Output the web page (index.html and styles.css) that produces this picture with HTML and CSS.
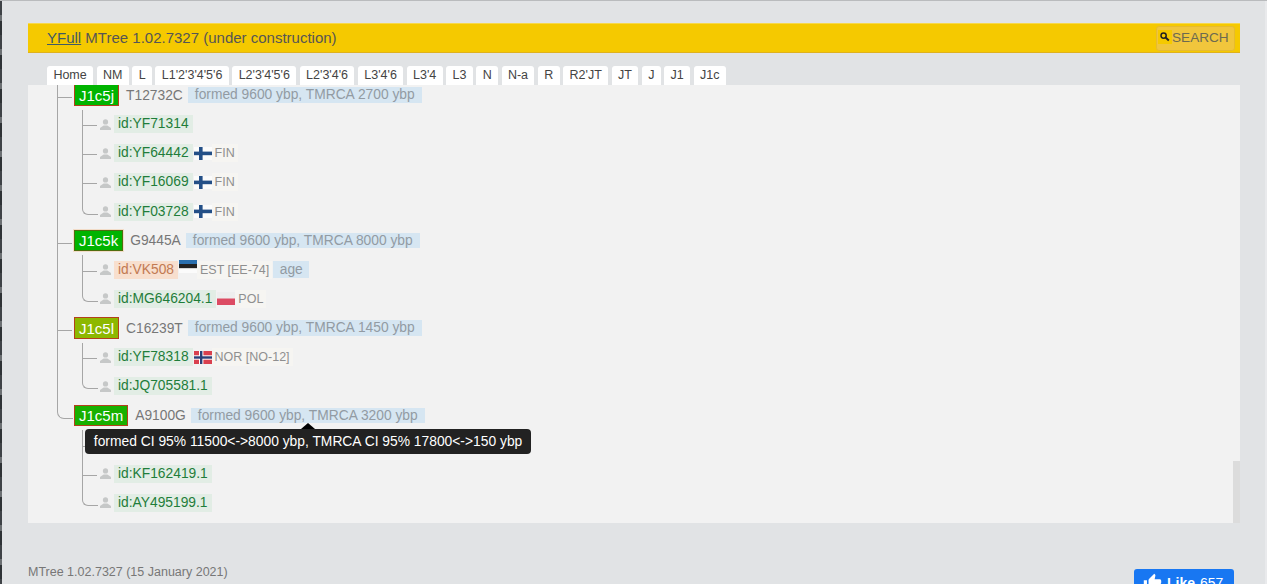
FILE: index.html
```html
<!DOCTYPE html>
<html lang="en">
<head>
<meta charset="utf-8">
<title>YFull MTree</title>
<link rel="stylesheet" href="styles.css">
</head>
<body>
<svg width="0" height="0" class="defs">
  <defs>
    <symbol id="person" viewBox="0 0 11 11">
      <circle cx="5.5" cy="2.9" r="2.6"/>
      <path d="M3.6 6.6h3.8L11 9v2H0V9z"/>
    </symbol>
    <symbol id="fin" viewBox="0 0 18 13">
      <rect width="18" height="13" fill="#fbfbfb"/>
      <rect y="4.6" width="18" height="3.6" fill="#234f87"/>
      <rect x="5" width="3.6" height="13" fill="#234f87"/>
    </symbol>
    <symbol id="est" viewBox="0 0 18 13">
      <rect width="18" height="4" fill="#2a6fae"/>
      <rect y="4" width="18" height="4.4" fill="#222"/>
      <rect y="8.4" width="18" height="4.6" fill="#fbfbfb"/>
    </symbol>
    <symbol id="pol" viewBox="0 0 18 13">
      <rect width="18" height="6.5" fill="#eeeeee"/>
      <rect y="6.5" width="18" height="6.5" fill="#dc4b63"/>
    </symbol>
    <symbol id="nor" viewBox="0 0 18 13">
      <rect width="18" height="13" fill="#d9404f"/>
      <rect x="5" width="4.4" height="13" fill="#fff"/>
      <rect y="4.3" width="18" height="4.4" fill="#fff"/>
      <rect x="6" width="2.4" height="13" fill="#2a3f78"/>
      <rect y="5.3" width="18" height="2.4" fill="#2a3f78"/>
    </symbol>
  </defs>
</svg>
<div class="edge"></div>
<div class="page">
  <header class="bar">
    <div class="title"><a href="#" class="title-link">YFull</a> MTree 1.02.7327 (under construction)</div>
    <div class="search">
      <span class="search-icon"><svg viewBox="0 0 14 14" width="14" height="14"><circle cx="5.6" cy="5.6" r="2.6" fill="none" stroke="#222" stroke-width="1.5"/><path d="M7.6 7.6l3.2 2.8" stroke="#222" stroke-width="2"/></svg></span>SEARCH
    </div>
  </header>

  <nav class="tabs">
    <a class="tab">Home</a><a class="tab">NM</a><a class="tab">L</a><a class="tab">L1'2'3'4'5'6</a><a class="tab">L2'3'4'5'6</a><a class="tab">L2'3'4'6</a><a class="tab">L3'4'6</a><a class="tab">L3'4</a><a class="tab">L3</a><a class="tab">N</a><a class="tab">N-a</a><a class="tab">R</a><a class="tab">R2'JT</a><a class="tab">JT</a><a class="tab">J</a><a class="tab">J1</a><a class="tab">J1c</a>
  </nav>

  <main class="panel">
    <ul class="tree">
      <li class="node">
        <div class="row">
          <span class="badge badge-green">J1c5j</span><span class="snp">T12732C</span><span class="age">formed 9600 ybp, TMRCA 2700 ybp</span>
        </div>
        <ul class="kids">
          <li class="kid"><svg class="person"><use href="#person"/></svg><span class="id">id:YF71314</span></li>
          <li class="kid"><svg class="person"><use href="#person"/></svg><span class="id">id:YF64442</span><svg class="flag"><use href="#fin"/></svg><span class="land">FIN</span></li>
          <li class="kid"><svg class="person"><use href="#person"/></svg><span class="id">id:YF16069</span><svg class="flag"><use href="#fin"/></svg><span class="land">FIN</span></li>
          <li class="kid"><svg class="person"><use href="#person"/></svg><span class="id">id:YF03728</span><svg class="flag"><use href="#fin"/></svg><span class="land">FIN</span></li>
        </ul>
      </li>
      <li class="node">
        <div class="row">
          <span class="badge badge-olive">J1c5k</span><span class="snp">G9445A</span><span class="age">formed 9600 ybp, TMRCA 8000 ybp</span>
        </div>
        <ul class="kids">
          <li class="kid"><svg class="person"><use href="#person"/></svg><span class="id id-orange">id:VK508</span><svg class="flag flag-up"><use href="#est"/></svg><span class="land">EST [EE-74]</span><span class="age age-short">age</span></li>
          <li class="kid"><svg class="person"><use href="#person"/></svg><span class="id">id:MG646204.1</span><svg class="flag"><use href="#pol"/></svg><span class="land">POL</span></li>
        </ul>
      </li>
      <li class="node">
        <div class="row">
          <span class="badge badge-lime">J1c5l</span><span class="snp">C16239T</span><span class="age">formed 9600 ybp, TMRCA 1450 ybp</span>
        </div>
        <ul class="kids">
          <li class="kid"><svg class="person"><use href="#person"/></svg><span class="id">id:YF78318</span><svg class="flag"><use href="#nor"/></svg><span class="land">NOR [NO-12]</span></li>
          <li class="kid"><svg class="person"><use href="#person"/></svg><span class="id">id:JQ705581.1</span></li>
        </ul>
      </li>
      <li class="node">
        <div class="row">
          <span class="badge badge-red">J1c5m</span><span class="snp">A9100G</span><span class="age age-tip">formed 9600 ybp, TMRCA 3200 ybp<span class="tooltip">formed CI 95% 11500&lt;-&gt;8000 ybp, TMRCA CI 95% 17800&lt;-&gt;150 ybp</span></span>
        </div>
        <ul class="kids">
          <li class="kid"></li>
          <li class="kid"><svg class="person"><use href="#person"/></svg><span class="id">id:KF162419.1</span></li>
          <li class="kid"><svg class="person"><use href="#person"/></svg><span class="id">id:AY495199.1</span></li>
        </ul>
      </li>
    </ul>
    <div class="thumb"></div>
  </main>

  <footer class="foot">
    <span class="version">MTree 1.02.7327 (15 January 2021)</span>
    <span class="like">
      <svg viewBox="0 0 24 24" width="19" height="19"><path fill="#fff" d="M1 21h4V9H1v12zm22-11c0-1.1-.9-2-2-2h-6.31l.95-4.57.03-.32c0-.41-.17-.79-.44-1.06L14.17 1 7.59 7.59C7.22 7.95 7 8.45 7 9v10c0 1.1.9 2 2 2h9c.83 0 1.54-.5 1.84-1.22l3.02-7.05c.09-.23.14-.47.14-.73v-2z"/></svg>
      <b class="like-word">Like</b><span class="like-count">657</span>
    </span>
  </footer>
</div>
<div class="edge-right"></div>
</body>
</html>
```
FILE: styles.css
```css
* { box-sizing: border-box; }
html, body { margin: 0; height: 584px; overflow: hidden; }
body {
  display: flex;
  background: #e1e3e5;
  border-top: 1px solid #b9bbbd;
  font-family: "Liberation Sans", Arial, sans-serif;
  font-size: 13.8px;
  color: #777;
}
.defs { position: absolute; }
.edge {
  flex: 0 0 2px;
  background: repeating-linear-gradient(180deg, #3f4347 0 14px, #6b6f72 14px 20px, #2f3336 20px 34px);
}
.edge-right { flex: 0 0 2px; background: #e9eaec; }
.page { flex: 1; padding: 22px 25px 0 26px; min-width: 0; }

.bar {
  height: 30px;
  display: flex;
  align-items: center;
  justify-content: space-between;
  background: #f5c900;
  border-top: 1px solid #f7d84a;
  border-bottom: 1px solid #dfb11c;
  padding: 0 5px 0 19px;
}
.title { font-size: 15px; color: #555; padding-bottom: 1px; }
.title-link { color: #3f5a66; text-decoration: underline; }
.search {
  width: 79px;
  height: 25px;
  display: flex;
  align-items: center;
  padding: 0 0 2px 1px;
  background: #f1c63c;
  border: 1px solid #e6bb2e;
  border-radius: 3px;
  color: #6d6a50;
  font-size: 13.6px;
}
.search-icon { display: flex; background: #f5c900; }

.tabs { display: flex; gap: 3.45px; padding: 13px 0 0 19px; height: 32px; }
.tab {
  height: 19px;
  padding: 0 6.4px;
  line-height: 19px;
  background: #fff;
  border-radius: 3px 3px 0 0;
  font-size: 12.5px;
  color: #444;
}

.panel {
  position: relative;
  height: 438px;
  background: #f2f2f2;
  overflow: hidden;
}
.tree { list-style: none; margin: -4.5px 0 0; padding: 0 0 0 29px; }
.node { position: relative; padding-left: 17px; }
.node::before {
  content: "";
  position: absolute;
  left: 0;
  top: 0;
  bottom: 0;
  border-left: 1px solid #a6a6a6;
}
.node::after {
  content: "";
  position: absolute;
  left: 0;
  top: 16.5px;
  width: 15px;
  border-top: 1px solid #a6a6a6;
}
.node:last-child::before { bottom: auto; height: 9px; }
.node:last-child::after {
  top: 9px;
  height: 8.5px;
  border-top: 0;
  border-left: 1px solid #a6a6a6;
  border-bottom: 1px solid #a6a6a6;
  border-bottom-left-radius: 7px;
}
.row { height: 29.14px; display: flex; align-items: center; white-space: nowrap; }
.badge {
  display: flex;
  align-items: center;
  height: 21.5px;
  padding: 0 4px;
  border: 1px solid #b3401c;
  font-size: 15px;
  color: #fff;
}
.badge-green { background: #00b400; }
.badge-olive { background: #00b400; border-color: #4f6d10; box-shadow: 0 0 0 1px #f2dcc8; }
.badge-lime { background: #8db800; }
.badge-red { background: #18b000; }
.snp { margin-left: 7px; color: #777; }
.age {
  margin-left: 5px;
  padding: 0 7px;
  line-height: 15.5px;
  background: #d6e6f2;
  color: #929ba3;
}
.age-short { margin-left: 1px; padding: 0 6.5px; line-height: 17px; }
.age-tip { position: relative; margin-left: 5px; }

.kids { list-style: none; margin: 0; padding: 0 0 0 8px; }
.kid {
  position: relative;
  height: 29.14px;
  display: flex;
  align-items: center;
  padding-left: 18px;
  white-space: nowrap;
}
.kid::before {
  content: "";
  position: absolute;
  left: 0;
  top: 0;
  bottom: 0;
  border-left: 1px solid #a6a6a6;
}
.kid::after {
  content: "";
  position: absolute;
  left: 0;
  top: 15.5px;
  width: 15px;
  border-top: 1px solid #a6a6a6;
}
.kid:last-child::before { bottom: auto; height: 8px; }
.kid:last-child::after {
  top: 8px;
  height: 8.5px;
  border-top: 0;
  border-left: 1px solid #a6a6a6;
  border-bottom: 1px solid #a6a6a6;
  border-bottom-left-radius: 6px;
}
.person { width: 11px; height: 11px; fill: #c6c8c8; flex: none; margin: 0 3px 0 0; }
.id {
  padding: 0 4px;
  line-height: 18px;
  background: #e2ede5;
  color: #1f7d3a;
}
.id-orange { background: #f8dfce; color: #c27a52; }
.flag { width: 18px; height: 13px; flex: none; margin: 0 0 0 1px; }
.flag-up { margin-top: -6px; }
.land {
  padding: 0 3px;
  line-height: 18px;
  background: #f6f5f2;
  font-size: 12.5px;
  color: #8f8f8f;
}

.tooltip {
  position: absolute;
  z-index: 2;
  left: -106px;
  top: 21px;
  height: 25px;
  padding: 0 9px;
  line-height: 25px;
  background: #222;
  border-radius: 4px;
  color: #fff;
  font-size: 13.83px;
  white-space: nowrap;
}
.tooltip::before {
  content: "";
  position: absolute;
  left: 216px;
  top: -6px;
  border-left: 7px solid transparent;
  border-right: 7px solid transparent;
  border-bottom: 6px solid #000;
}
.thumb {
  position: absolute;
  right: 0;
  bottom: 0;
  width: 7px;
  height: 62px;
  background: #dcdcdc;
}

.foot { display: flex; justify-content: space-between; align-items: flex-start; padding: 46px 6px 0 0; }
.version { font-size: 12.5px; color: #777; line-height: 14px; margin-top: -4px; }
.like {
  width: 100px;
  height: 28px;
  display: flex;
  align-items: center;
  gap: 5px;
  padding: 0 0 1px 9px;
  background: #1877f2;
  border-radius: 3px;
  color: #fff;
  font-size: 14px;
}
.like-word { font-weight: 700; }
.like-count { font-weight: 400; }
```
